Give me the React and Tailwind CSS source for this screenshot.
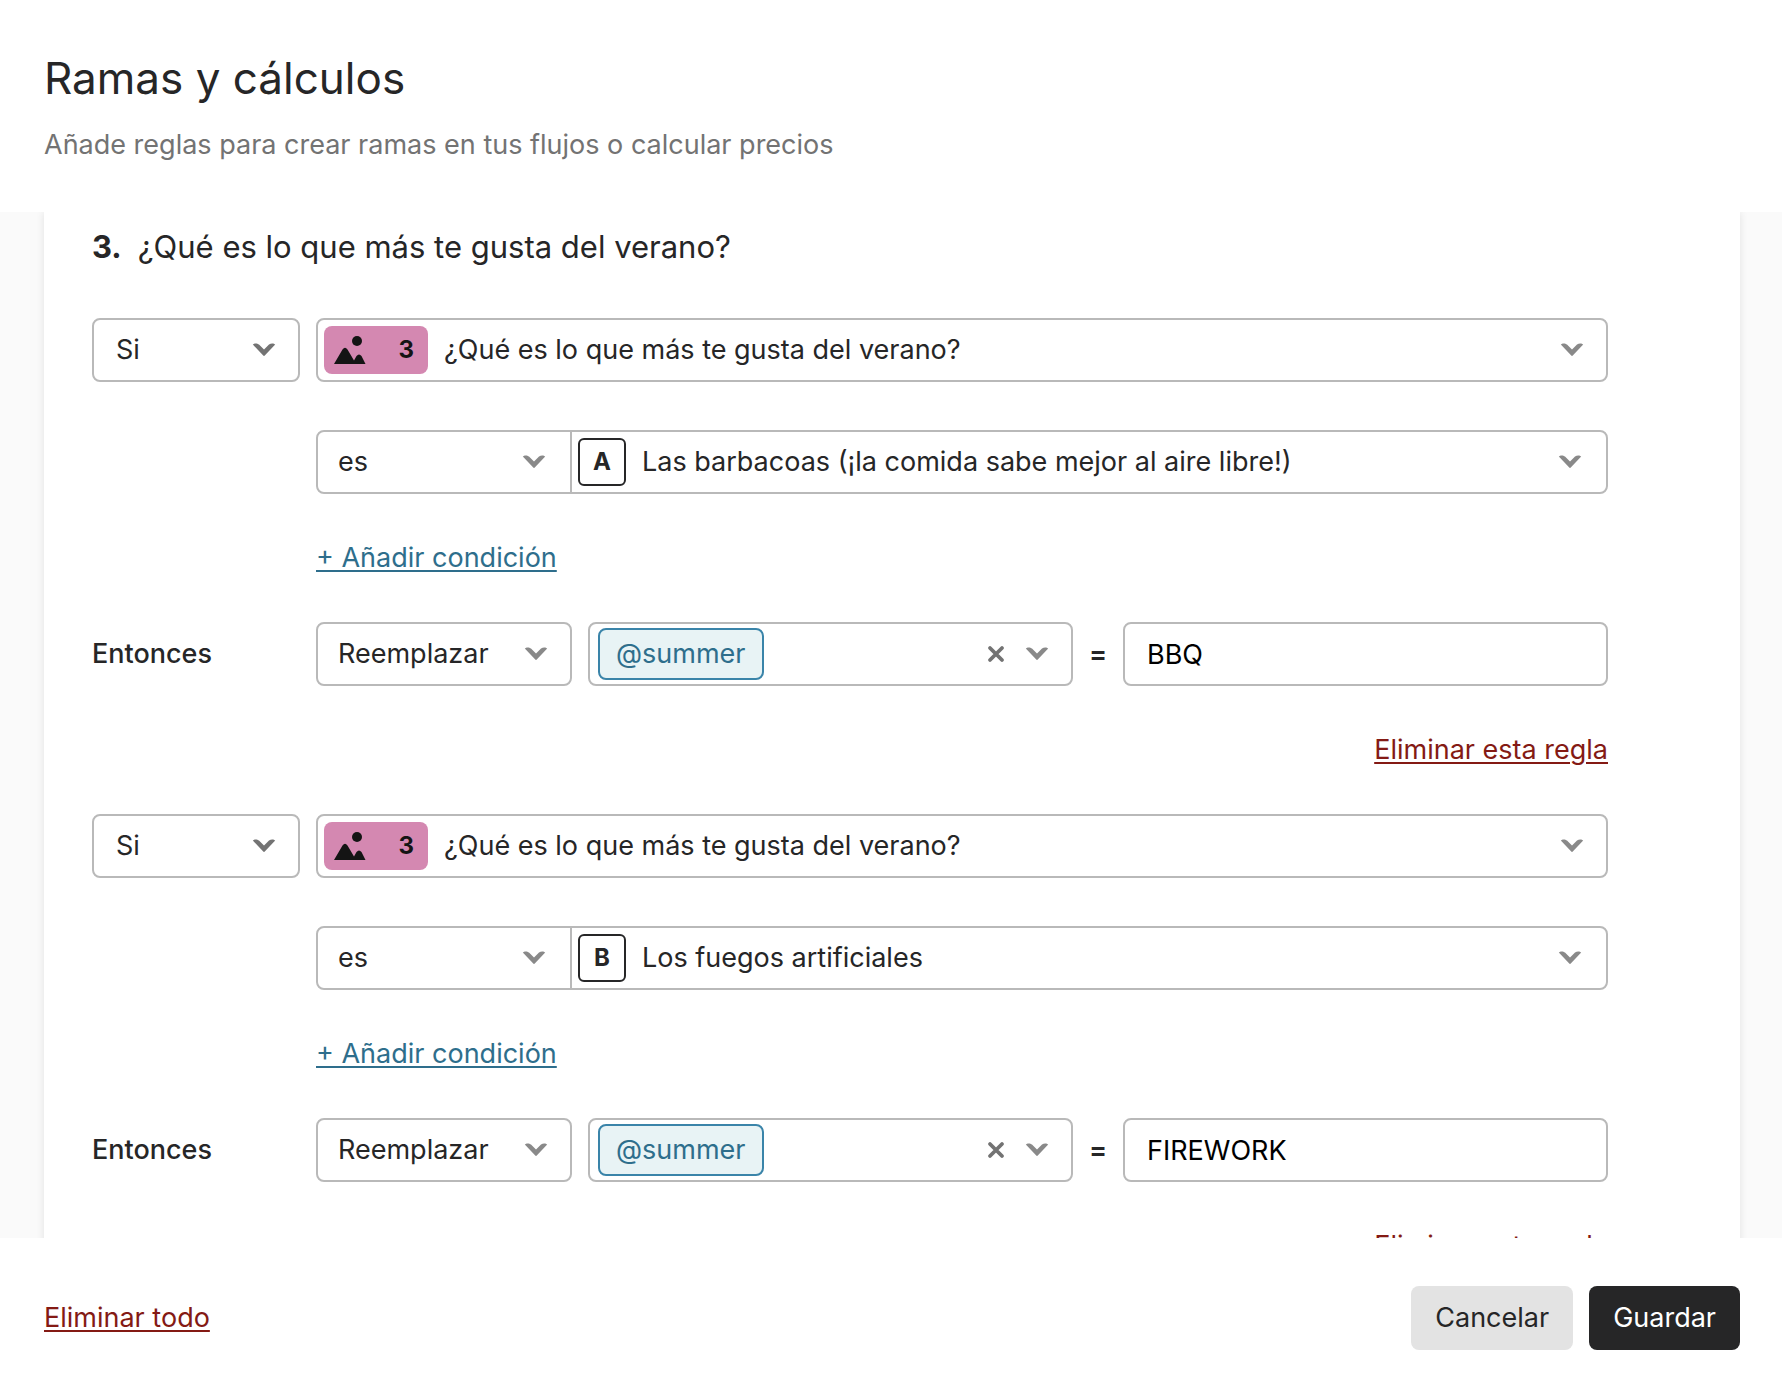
const rules = [
  { id: 1, letter: "A", answer: "Las barbacoas (¡la comida sabe mejor al aire libre!)", value: "BBQ" },
  { id: 2, letter: "B", answer: "Los fuegos artificiales", value: "FIREWORK" },
];

const question = "¿Qué es lo que más te gusta del verano?";

const Chevron = ({ className = "text-[#898989]" }) => (
  <svg viewBox="0 0 24 14" className={`pointer-events-none h-[14px] w-6 shrink-0 ${className}`} fill="currentColor" aria-hidden="true">
    <path d="M.8 1.6 C2 .2 5 -.2 7 1.600 L12 6.500 L17 1.600 C19 -.2 22 .2 23.200 1.600 L13 12.300 Q12 13.600 11 12.300 Z" />
  </svg>
);

const Cross = () => (
  <svg viewBox="0 0 18 18" className="h-[18px] w-[18px]" fill="none" stroke="currentColor" strokeWidth="3.800" strokeLinecap="round" aria-hidden="true">
    <path d="M3 3 L15 15 M15 3 L3 15" />
  </svg>
);

const PictureIcon = () => (
  <svg viewBox="0 0 32 28" className="h-7 w-8" fill="#141414" aria-hidden="true">
    <circle cx="23" cy="5" r="5" />
    <path d="M0 28 L8.500 13.500 Q11 10 13.500 13.500 L20 24.500 L22.500 20 Q25 17 27.500 20 L31.500 28 Z" />
  </svg>
);

const box = "flex h-16 min-w-0 items-center rounded-lg border-2 border-[#b9b9b9] bg-white";
const select = "h-full min-w-0 flex-1 appearance-none bg-transparent outline-none";
const link = "underline decoration-2 underline-offset-[3px]";

const Rule = ({ rule }) => (
  <div className="grid grid-cols-[208px_minmax(0,1fr)] gap-x-4 gap-y-12">
    {/* Question */}
    <div className={`${box} px-[22px]`}>
      <select aria-label="Tipo de regla" className={select}>
        <option>Si</option>
      </select>
      <Chevron className="text-[#737373]" />
    </div>
    <div className={`${box} pl-1.5 pr-[22px]`}>
      <span className="mr-4 flex h-12 w-[104px] shrink-0 items-center justify-between rounded-lg bg-[#d488b1] pl-2.5 pr-3.5 text-2xl font-bold text-[#141414]">
        <PictureIcon />
        3
      </span>
      <select aria-label="Pregunta" className={select}>
        <option>{question}</option>
      </select>
      <Chevron />
    </div>

    {/* Condition */}
    <div className={`${box} col-start-2`}>
      <div className="flex h-full w-[254px] shrink-0 items-center border-r-2 border-[#b9b9b9] pl-5 pr-6">
        <select aria-label="Comparación" className={select}>
          <option>es</option>
        </select>
        <Chevron />
      </div>
      <div className="flex h-full min-w-0 flex-1 items-center pl-1.5 pr-6">
        <span className="mr-4 flex h-12 w-12 shrink-0 items-center justify-center rounded-md border-2 border-[#262627] text-2xl font-bold">
          {rule.letter}
        </span>
        <select aria-label="Respuesta" className={select}>
          <option>{rule.answer}</option>
        </select>
        <Chevron />
      </div>
    </div>
    <a href="#condicion" className={`${link} col-start-2 justify-self-start text-[#2e6e8c]`}>
      + Añadir condición
    </a>

    {/* Action */}
    <label htmlFor={`action-${rule.id}`} className="self-center font-medium">Entonces</label>
    <div className="grid grid-cols-[256px_minmax(0,1fr)_18px_minmax(0,1fr)] items-center gap-4">
      <div className={`${box} pl-5 pr-[22px]`}>
        <select id={`action-${rule.id}`} className={select}>
          <option>Reemplazar</option>
        </select>
        <Chevron />
      </div>
      <div className={`${box} pl-2 pr-[22px]`}>
        <button type="button" className="h-[52px] shrink-0 rounded-lg border-2 border-[#3a84a9] bg-[#e8f3f5] px-4 text-[#2e6e8c]">
          @summer
        </button>
        <button type="button" aria-label="Quitar variable" className="ml-auto mr-5 text-[#737373]">
          <Cross />
        </button>
        <Chevron />
      </div>
      <span className="text-center font-semibold">=</span>
      <input
        type="text"
        aria-label="Valor"
        defaultValue={rule.value}
        className={`${box} px-[22px] text-black outline-none`}
      />
    </div>
    <a href="#regla" className={`${link} col-start-2 justify-self-end text-[#841a14]`}>
      Eliminar esta regla
    </a>
  </div>
);

const App = () => {
  return (
    <div className="flex h-screen flex-col bg-white font-['Inter',sans-serif] text-[27px] leading-8 text-[#262627]">
      <header className="px-11 pb-[51px] pt-12">
        <h1 className="text-[44px] leading-[60px]">Ramas y cálculos</h1>
        <p className="mt-[21px] text-[#737373]">Añade reglas para crear ramas en tus flujos o calcular precios</p>
      </header>

      <main className="min-h-0 flex-1 overflow-y-auto bg-[#fafafa] pl-11 pr-[42px] [scrollbar-width:none]">
        <section className="bg-white pb-12 pl-12 pr-[132px] pt-[15px] shadow-[0_0_8px_rgba(0,0,0,0.1)]">
          <h2 className="mb-[51px] flex gap-4 text-[31px] leading-10">
            <span className="font-bold">3.</span>
            {question}
          </h2>
          <div className="flex flex-col gap-12">
            {rules.map((rule) => (
              <Rule key={rule.id} rule={rule} />
            ))}
          </div>
        </section>
      </main>

      <footer className="flex items-center justify-between pb-10 pl-11 pr-[42px] pt-12">
        <a href="#todo" className={`${link} text-[#841a14]`}>Eliminar todo</a>
        <div className="flex gap-4">
          <button type="button" className="h-16 rounded-lg bg-[#e3e3e3] px-6">Cancelar</button>
          <button type="button" className="h-16 rounded-lg bg-[#262627] px-6 text-white">Guardar</button>
        </div>
      </footer>
    </div>
  );
};

export default App;
